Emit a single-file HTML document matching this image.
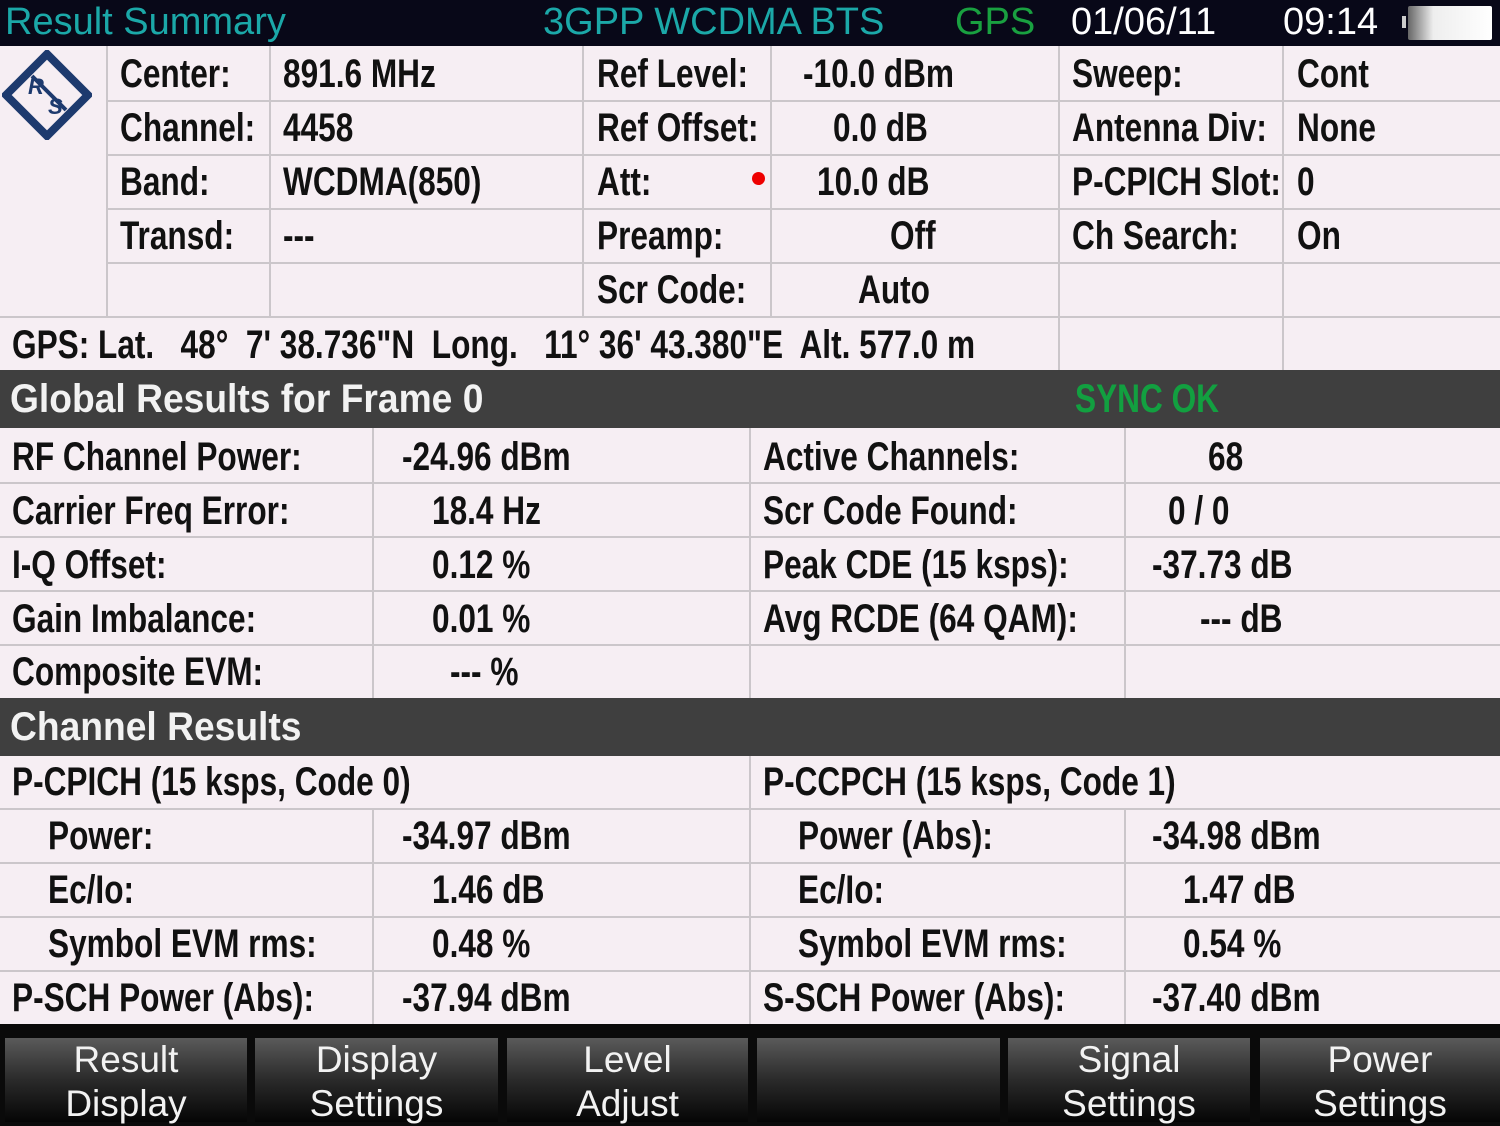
<!DOCTYPE html>
<html><head><meta charset="utf-8"><style>
body{margin:0;width:1500px;height:1126px;background:#f6eef3;position:relative;overflow:hidden;font-family:"Liberation Sans Narrow","Liberation Sans",sans-serif;font-weight:bold;}
.t{position:absolute;font-size:40px;line-height:40px;color:#111;white-space:pre;transform:scaleX(.79);transform-origin:0 0;}
.hd{transform:none;}
.bt{transform:scaleX(.93);}
.h{position:absolute;left:0;height:2px;background:#cbc6ca;}
.v{position:absolute;width:2px;background:#cbc6ca;}
.bar{position:absolute;left:0;width:1500px;background:#3f3f3f;}
.btn{position:absolute;top:1038px;height:84px;background:linear-gradient(#5a5a5a,#2a2a2a 50%,#050505);color:#f2f2f2;font-weight:normal;font-size:37px;line-height:44px;text-align:center;}
</style></head><body>
<div style="position:absolute;left:0;top:0;width:1500px;height:46px;background:#080818"></div>
<div class="t hd" style="left:5px;top:2px;color:#1ba8a8;font-weight:normal;font-size:38px">Result Summary</div>
<div class="t hd" style="left:543px;top:2px;color:#1ba8a8;font-weight:normal;font-size:38px">3GPP WCDMA BTS</div>
<div class="t hd" style="left:955px;top:2px;color:#19a040;font-weight:normal;font-size:38px">GPS</div>
<div class="t hd" style="left:1071px;top:2px;color:#fff;font-weight:normal;font-size:38px">01/06/11</div>
<div class="t hd" style="left:1283px;top:2px;color:#fff;font-weight:normal;font-size:38px">09:14</div>
<div style="position:absolute;left:1402px;top:16px;width:4px;height:12px;background:#ccc"></div>
<div style="position:absolute;left:1408px;top:6px;width:84px;height:34px;background:linear-gradient(90deg,#666,#eee 30%,#fff);border-radius:2px"></div>

<svg style="position:absolute;left:2px;top:50px" width="90" height="90" viewBox="0 0 90 90"><polygon points="45,4 86,45 45,86 4,45" fill="none" stroke="#1d3a6e" stroke-width="8"/><line x1="30" y1="26" x2="64" y2="60" stroke="#1d3a6e" stroke-width="4"/><text x="26" y="44" font-family="Liberation Sans" font-size="22" font-style="italic" fill="#1d3a6e">R</text><text x="46" y="64" font-family="Liberation Sans" font-size="22" font-style="italic" fill="#1d3a6e">S</text></svg>

<div class="h" style="left:107px;top:100px;width:1393px"></div>
<div class="h" style="left:107px;top:154px;width:1393px"></div>
<div class="h" style="left:107px;top:208px;width:1393px"></div>
<div class="h" style="left:107px;top:262px;width:1393px"></div>
<div class="h" style="top:316px;width:1500px"></div>
<div class="v" style="left:106px;top:46px;height:270px"></div>
<div class="v" style="left:269px;top:46px;height:270px"></div>
<div class="v" style="left:582px;top:46px;height:270px"></div>
<div class="v" style="left:770px;top:46px;height:270px"></div>
<div class="v" style="left:1058px;top:46px;height:324px"></div>
<div class="v" style="left:1282px;top:46px;height:324px"></div>

<div class="t" style="left:120px;top:54px">Center:</div>
<div class="t" style="left:283px;top:54px">891.6 MHz</div>
<div class="t" style="left:597px;top:54px">Ref Level:</div>
<div class="t" style="left:803px;top:54px">-10.0 dBm</div>
<div class="t" style="left:1072px;top:54px">Sweep:</div>
<div class="t" style="left:1297px;top:54px">Cont</div>

<div class="t" style="left:120px;top:108px">Channel:</div>
<div class="t" style="left:283px;top:108px">4458</div>
<div class="t" style="left:597px;top:108px">Ref Offset:</div>
<div class="t" style="left:833px;top:108px">0.0 dB</div>
<div class="t" style="left:1072px;top:108px">Antenna Div:</div>
<div class="t" style="left:1297px;top:108px">None</div>

<div class="t" style="left:120px;top:162px">Band:</div>
<div class="t" style="left:283px;top:162px">WCDMA(850)</div>
<div class="t" style="left:597px;top:162px">Att:</div>
<div style="position:absolute;left:752px;top:172px;width:13px;height:13px;border-radius:50%;background:#e00"></div>
<div class="t" style="left:817px;top:162px">10.0 dB</div>
<div class="t" style="left:1072px;top:162px">P-CPICH Slot:</div>
<div class="t" style="left:1297px;top:162px">0</div>

<div class="t" style="left:120px;top:216px">Transd:</div>
<div class="t" style="left:283px;top:216px">---</div>
<div class="t" style="left:597px;top:216px">Preamp:</div>
<div class="t" style="left:890px;top:216px">Off</div>
<div class="t" style="left:1072px;top:216px">Ch Search:</div>
<div class="t" style="left:1297px;top:216px">On</div>

<div class="t" style="left:597px;top:270px">Scr Code:</div>
<div class="t" style="left:858px;top:270px">Auto</div>

<div class="t" style="left:12px;top:325px">GPS: Lat.   48°  7' 38.736"N  Long.   11° 36' 43.380"E  Alt. 577.0 m</div>

<div class="bar" style="top:370px;height:58px"></div>
<div class="t bt" style="left:10px;top:379px;color:#f2f2f2">Global Results for Frame 0</div>
<div class="t" style="left:1075px;top:379px;color:#12a040">SYNC OK</div>

<div class="h" style="top:482px;width:1500px"></div>
<div class="h" style="top:536px;width:1500px"></div>
<div class="h" style="top:590px;width:1500px"></div>
<div class="h" style="top:644px;width:1500px"></div>
<div class="v" style="left:372px;top:428px;height:270px"></div>
<div class="v" style="left:749px;top:428px;height:270px"></div>
<div class="v" style="left:1124px;top:428px;height:270px"></div>

<div class="t" style="left:12px;top:437px">RF Channel Power:</div>
<div class="t" style="left:402px;top:437px">-24.96 dBm</div>
<div class="t" style="left:763px;top:437px">Active Channels:</div>
<div class="t" style="left:1208px;top:437px">68</div>

<div class="t" style="left:12px;top:491px">Carrier Freq Error:</div>
<div class="t" style="left:432px;top:491px">18.4 Hz</div>
<div class="t" style="left:763px;top:491px">Scr Code Found:</div>
<div class="t" style="left:1168px;top:491px">0 / 0</div>

<div class="t" style="left:12px;top:545px">I-Q Offset:</div>
<div class="t" style="left:432px;top:545px">0.12 %</div>
<div class="t" style="left:763px;top:545px">Peak CDE (15 ksps):</div>
<div class="t" style="left:1152px;top:545px">-37.73 dB</div>

<div class="t" style="left:12px;top:599px">Gain Imbalance:</div>
<div class="t" style="left:432px;top:599px">0.01 %</div>
<div class="t" style="left:763px;top:599px">Avg RCDE (64 QAM):</div>
<div class="t" style="left:1200px;top:599px">--- dB</div>

<div class="t" style="left:12px;top:652px">Composite EVM:</div>
<div class="t" style="left:450px;top:652px">--- %</div>

<div class="bar" style="top:698px;height:58px"></div>
<div class="t bt" style="left:10px;top:707px;color:#f2f2f2">Channel Results</div>

<div class="h" style="top:808px;width:1500px"></div>
<div class="h" style="top:862px;width:1500px"></div>
<div class="h" style="top:916px;width:1500px"></div>
<div class="h" style="top:970px;width:1500px"></div>
<div class="v" style="left:749px;top:756px;height:268px"></div>
<div class="v" style="left:372px;top:808px;height:216px"></div>
<div class="v" style="left:1124px;top:808px;height:216px"></div>

<div class="t" style="left:12px;top:762px">P-CPICH (15 ksps, Code 0)</div>
<div class="t" style="left:763px;top:762px">P-CCPCH (15 ksps, Code 1)</div>

<div class="t" style="left:48px;top:816px">Power:</div>
<div class="t" style="left:402px;top:816px">-34.97 dBm</div>
<div class="t" style="left:798px;top:816px">Power (Abs):</div>
<div class="t" style="left:1152px;top:816px">-34.98 dBm</div>

<div class="t" style="left:48px;top:870px">Ec/Io:</div>
<div class="t" style="left:432px;top:870px">1.46 dB</div>
<div class="t" style="left:798px;top:870px">Ec/Io:</div>
<div class="t" style="left:1183px;top:870px">1.47 dB</div>

<div class="t" style="left:48px;top:924px">Symbol EVM rms:</div>
<div class="t" style="left:432px;top:924px">0.48 %</div>
<div class="t" style="left:798px;top:924px">Symbol EVM rms:</div>
<div class="t" style="left:1183px;top:924px">0.54 %</div>

<div class="t" style="left:12px;top:978px">P-SCH Power (Abs):</div>
<div class="t" style="left:402px;top:978px">-37.94 dBm</div>
<div class="t" style="left:763px;top:978px">S-SCH Power (Abs):</div>
<div class="t" style="left:1152px;top:978px">-37.40 dBm</div>

<div style="position:absolute;left:0;top:1024px;width:1500px;height:102px;background:#0a0a0a"></div>
<div class="btn" style="left:5px;width:242px">Result<br>Display</div>
<div class="btn" style="left:255px;width:243px">Display<br>Settings</div>
<div class="btn" style="left:507px;width:241px">Level<br>Adjust</div>
<div class="btn" style="left:757px;width:243px"></div>
<div class="btn" style="left:1008px;width:242px">Signal<br>Settings</div>
<div class="btn" style="left:1260px;width:240px">Power<br>Settings</div>
</body></html>
